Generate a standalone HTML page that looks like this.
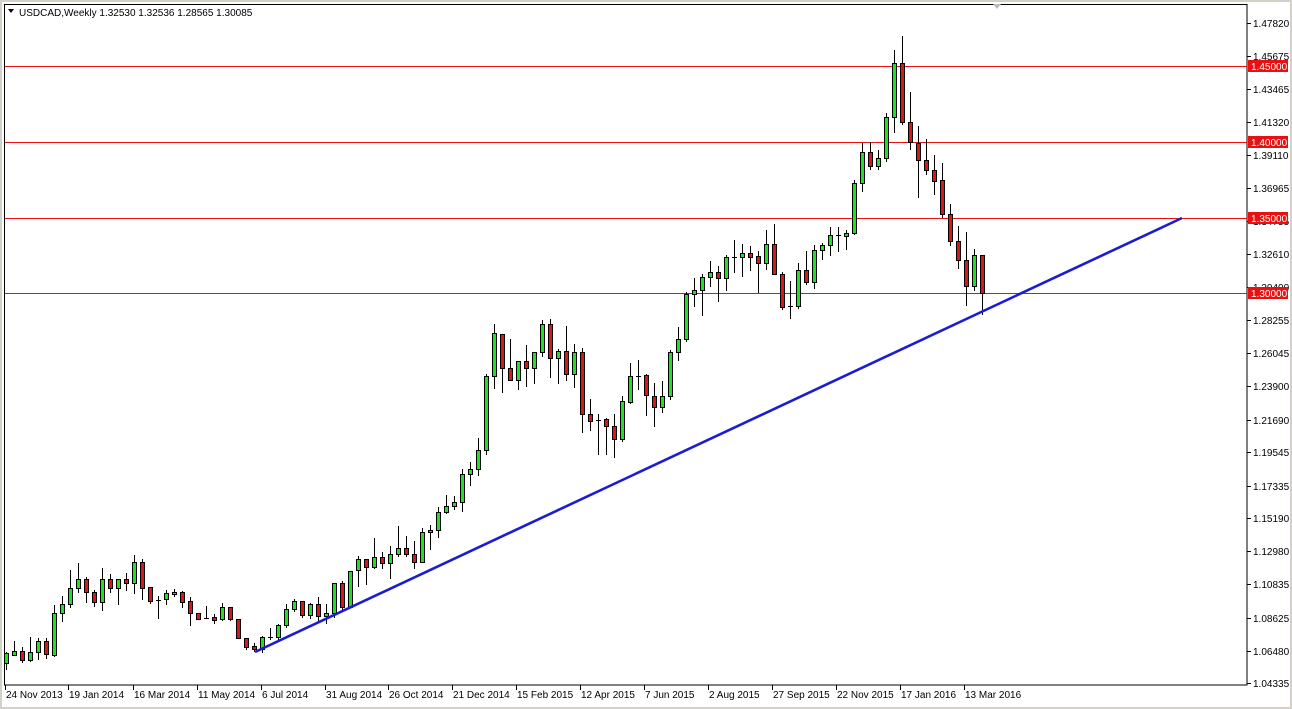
<!DOCTYPE html>
<html><head><meta charset="utf-8"><style>
html,body{margin:0;padding:0;background:#fff;}
svg{display:block;font-family:"Liberation Sans",Arial,sans-serif;}
</style></head><body>
<svg id="c" width="1292" height="709" viewBox="0 0 1292 709" xmlns="http://www.w3.org/2000/svg">
<rect x="0" y="0" width="1292" height="709" fill="#fff"/>
<rect x="0" y="0" width="1292" height="2" fill="#d4d0c8"/>
<rect x="0" y="0" width="2" height="709" fill="#d4d0c8"/>
<rect x="1290" y="0" width="2" height="709" fill="#d4d0c8"/>
<rect x="0" y="707" width="1292" height="2" fill="#d4d0c8"/>
<rect x="4.5" y="4.5" width="1242.5" height="680.5" fill="none" stroke="#000" stroke-width="1"/>
<polygon points="993,4 1001,4 997,9" fill="#bbb"/>
<g id="hl" stroke="#e81010" stroke-width="1">
<line x1="5" y1="66.5" x2="1247" y2="66.5"/>
<line x1="5" y1="142.5" x2="1247" y2="142.5"/>
<line x1="5" y1="218.5" x2="1247" y2="218.5"/>
<line x1="5" y1="293.5" x2="1247" y2="293.5"/>
</g>
<g id="cd"></g>
<line x1="255" y1="652" x2="1182" y2="218" stroke="#1c1cd0" stroke-width="2.6"/>
<g id="ax" font-size="10" fill="#000"></g>
<polygon points="8,9 14,9 11,13" fill="#000"/>
<text x="19" y="16" font-size="10">USDCAD,Weekly  1.32530 1.32536 1.28565 1.30085</text>
</svg>
<script>
var d=[
["G",653,663,652,670],["G",651,655,641,656],["R",651,660,647,663],["G",652,660,637,662],["G",641,652,638,660],["R",641,654,638,659],["G",613,655,605,657],["G",604,613,596,622],["G",588,604,570,608],["G",579,588,563,593],
["R",579,592,577,603],["R",592,602,590,607],["G",579,602,568,611],["R",579,588,574,593],["G",579,588,579,605],["R",579,583,573,591],["G",562,583,555,594],["R",562,588,559,600],["R",587,601,587,604],["D",600,600,596,619],
["G",593,599,590,605],["G",592,594,589,597],["R",592,602,591,608],["R",601,613,597,626],["R",613,619,613,619],["D",618,618,606,619],["R",617,620,614,624],["G",607,619,603,621],["R",607,619,607,621],["R",619,638,620,638],
["R",638,647,638,650],["R",646,649,643,652],["G",637,649,636,653],["D",637,637,628,640],["G",625,637,624,640],["G",609,625,604,628],["G",601,609,599,612],["R",601,615,601,618],["G",604,615,603,619],["R",604,616,597,622],
["G",613,616,604,624],["G",583,613,583,618],["R",583,607,581,612],["G",571,607,571,608],["G",559,570,556,587],["R",559,567,559,585],["G",557,567,538,569],["R",557,563,552,569],["G",554,563,546,579],["G",548,554,526,557],
["R",548,554,536,557],["R",554,562,541,569],["G",532,562,528,563],["G",530,532,525,550],["G",512,530,507,538],["G",506,512,495,514],["G",502,506,496,510],["G",474,502,469,512],["G",469,474,462,486],["G",450,469,438,476],
["G",376,450,374,455],["G",333,376,324,389],["R",334,368,334,393],["R",368,380,339,381],["G",361,380,361,390],["R",361,368,345,387],["G",352,368,352,384],["G",324,352,320,357],["R",324,358,319,378],["G",351,358,349,384],
["R",351,374,326,381],["G",352,374,344,388],["R",352,414,348,433],["R",414,421,399,431],["D",420,420,414,455],["R",419,426,418,455],["R",426,439,414,458],["G",401,439,396,442],["G",376,402,363,404],["D",376,376,360,390],
["R",375,395,374,416],["R",396,407,383,427],["G",396,407,381,413],["G",352,396,350,400],["G",339,352,327,361],["G",294,339,292,342],["G",290,294,278,307],["G",277,290,274,316],["G",272,277,261,287],["R",272,278,266,302],
["G",257,278,255,291],["D",257,257,240,273],["G",253,257,244,277],["R",253,257,246,271],["R",256,263,251,293],["G",244,263,230,270],["R",244,274,224,275],["R",274,307,272,310],["D",306,306,281,319],["G",270,306,263,309],
["R",270,282,251,285],["G",250,282,245,289],["G",245,250,243,260],["G",235,245,227,256],["D",235,235,227,252],["G",233,236,230,250],["G",183,233,180,235],["G",152,183,143,192],["R",152,166,142,170],["G",158,166,150,170],
["G",117,158,113,162],["G",63,117,50,133],["R",63,122,36,125],["R",122,142,92,150],["R",143,160,126,198],["R",160,170,139,175],["R",170,181,155,195],["R",180,214,163,218],["R",214,241,204,246],["R",241,260,226,269],
["R",260,286,232,306],["G",255,286,249,291],["R",255,293,255,315]];
var s="";
for(var i=0;i<d.length;i++){var c=d[i],x=Math.round(5.7+8*i);
s+='<line x1="'+(x+0.5)+'" y1="'+c[3]+'" x2="'+(x+0.5)+'" y2="'+c[4]+'" stroke="#000" stroke-width="1"/>';
if(c[0]=="D"){s+='<line x1="'+(x-2)+'" y1="'+(c[1]+0.5)+'" x2="'+(x+3)+'" y2="'+(c[1]+0.5)+'" stroke="#000" stroke-width="1"/>';}
else{var h=Math.max(c[2]-c[1],2);s+='<rect x="'+(x-1.5)+'" y="'+(c[1]+0.5)+'" width="4" height="'+h+'" fill="'+(c[0]=="G"?"#22e022":"#d81818")+'" stroke="#000" stroke-width="1"/>';}}
document.getElementById("cd").innerHTML=s;
var p=[["1.47820",23],["1.45675",56],["1.43465",89],["1.41320",122],["1.39110",155],["1.36965",188],["1.34755",221],["1.32610",254],["1.30400",287],["1.28255",320],["1.26045",353],["1.23900",386],["1.21690",420],["1.19545",452],["1.17335",486],["1.15190",518],["1.12980",551],["1.10835",584],["1.08625",618],["1.06480",651],["1.04335",683]];
var a="";
for(var j=0;j<p.length;j++){a+='<line x1="1247" y1="'+(p[j][1]+0.5)+'" x2="1251" y2="'+(p[j][1]+0.5)+'" stroke="#000"/><text x="1253" y="'+(p[j][1]+4)+'">'+p[j][0]+'</text>';}
var r=[["1.45000",66],["1.40000",142],["1.35000",218],["1.30000",293]];
for(var k=0;k<r.length;k++){a+='<rect x="1248" y="'+(r[k][1]-6)+'" width="40" height="12" fill="#e81010"/><text x="1251" y="'+(r[k][1]+4)+'" fill="#fff">'+r[k][0]+'</text>';}
var t=[["24 Nov 2013",5],["19 Jan 2014",68],["16 Mar 2014",133],["11 May 2014",197],["6 Jul 2014",261],["31 Aug 2014",325],["26 Oct 2014",388],["21 Dec 2014",452],["15 Feb 2015",516],["12 Apr 2015",580],["7 Jun 2015",644],["2 Aug 2015",708],["27 Sep 2015",772],["22 Nov 2015",836],["17 Jan 2016",900],["13 Mar 2016",964]];
for(var m=0;m<t.length;m++){a+='<line x1="'+(t[m][1]+0.5)+'" y1="685" x2="'+(t[m][1]+0.5)+'" y2="690" stroke="#000"/><text x="'+(t[m][1]+1)+'" y="698">'+t[m][0]+'</text>';}
document.getElementById("ax").innerHTML=a;
</script>
</body></html>
